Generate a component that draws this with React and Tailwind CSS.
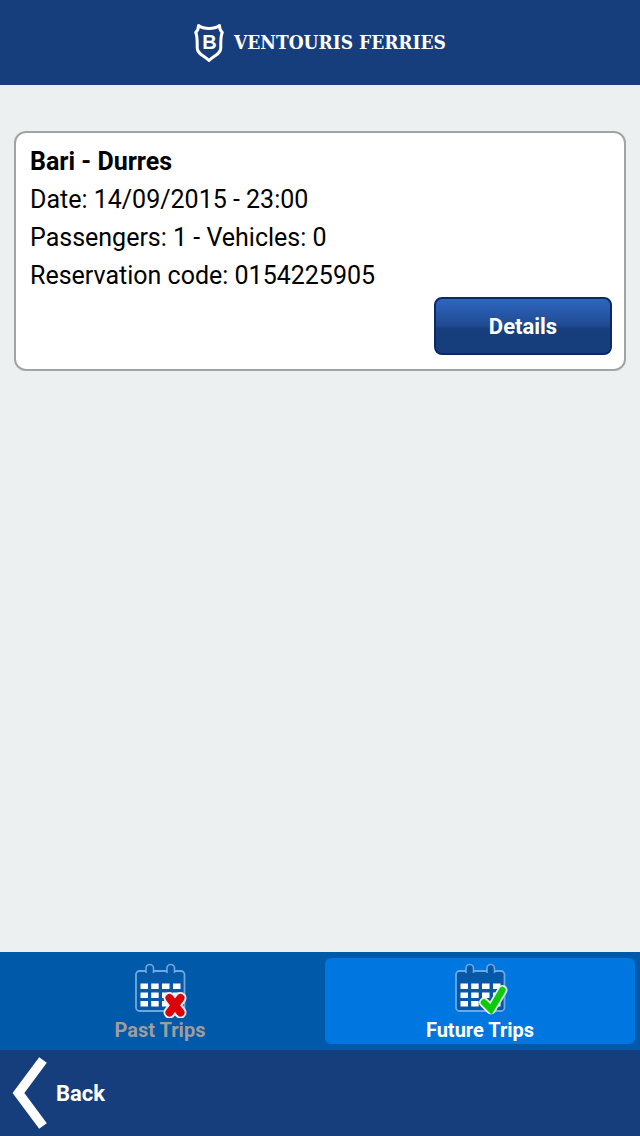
import { useState } from "react";

const TRIPS = {
  past: [],
  future: [
    { route: "Bari - Durres", date: "14/09/2015 - 23:00", passengers: 1, vehicles: 0, code: "0154225905" },
  ],
};

const TAB_CLASS = "flex flex-1 flex-col items-center rounded-md pt-1 pb-0.5 text-xl leading-6 font-bold";

function Shield() {
  return (
    <svg viewBox="0 0 30 40" className="h-10 w-[30px] shrink-0" fill="none" aria-hidden="true">
      <path
        d="M4.5 2.5C10 6.5 20 6.5 25.5 2.5C25.5 6 26.5 8 28.3 9.5C26.5 13 26.8 16 26.8 25C26.8 31 20 32.5 15 37.5C10 32.5 3.2 31 3.2 25C3.2 16 3.5 13 1.7 9.5C3.5 8 4.5 6 4.5 2.5Z"
        stroke="white"
        strokeWidth="3"
        strokeLinejoin="round"
      />
      <text x="15.5" y="26" textAnchor="middle" fill="white" fontSize="20" fontWeight="700" fontFamily="Liberation Sans, sans-serif">
        B
      </text>
    </svg>
  );
}

function CalendarIcon({ kind }) {
  return (
    <svg viewBox="0 0 56 56" className="h-14 w-14" fill="none" aria-hidden="true">
      <rect x="4" y="9" width="48.5" height="40" rx="3.5" fill="#0558a8" stroke="#6fa8de" strokeWidth="1.8" />
      <rect x="14" y="2.5" width="7.5" height="12" rx="3.7" fill="#0558a8" stroke="#6fa8de" strokeWidth="1.6" />
      <rect x="35" y="2.5" width="7.5" height="12" rx="3.7" fill="#0558a8" stroke="#6fa8de" strokeWidth="1.6" />
      <path d="M13 11h9.500v5h-9.500zM34 11h9.500v5h-9.500z" fill="#0558a8" />
      {[21.5, 30.5, 39].map((y) =>
        [8.5, 19.2, 30, 41].map((x) => <rect key={`${x}-${y}`} x={x} y={y} width="7.500" height="5.500" fill="white" />)
      )}
      {kind === "past" ? (
        <g strokeLinecap="round">
          <path d="M37.500 36L48.500 50.500M48.500 36L37.500 50.500" stroke="#e8eef5" strokeWidth="12" />
          <path d="M37.500 36L48.500 50.500M48.500 36L37.500 50.500" stroke="#dc0009" strokeWidth="8" />
        </g>
      ) : (
        <g strokeLinecap="round">
          <path d="M32 40.500L39 47.500L50.500 28" stroke="#e6f3e8" strokeWidth="10" strokeLinejoin="round" />
          <path d="M32 40.500L39 47.500L50.500 28" stroke="#0bcb0b" strokeWidth="6.500" />
        </g>
      )}
    </svg>
  );
}

function TripCard({ trip }) {
  return (
    <article className="rounded-xl border-2 border-[#a0a4a7] bg-white px-3 pt-2.5 pb-3.5 text-[25px] leading-[38px] text-black">
      <div className="px-0.5">
        <h2 className="font-bold">{trip.route}</h2>
        <p>Date: {trip.date}</p>
        <p>Passengers: {trip.passengers} - Vehicles: {trip.vehicles}</p>
        <p>Reservation code: {trip.code}</p>
      </div>
      <div className="flex justify-end pt-0.5">
        <button
          type="button"
          className="h-[58px] w-[178px] rounded-lg border-2 border-[#0b2a63] bg-linear-to-b from-[#2f66c2] via-[#1f4a90] via-50% to-[#173e7c] to-55% pt-0.5 text-[22px] font-bold text-white"
        >
          Details
        </button>
      </div>
    </article>
  );
}

export default function App() {
  const [tab, setTab] = useState("future");

  return (
    <div className="flex min-h-screen flex-col bg-[#ecf0f1] font-[Roboto,sans-serif]">
      <header className="flex h-[85px] items-center justify-center gap-2.5 bg-[#173e7c]">
        <Shield />
        <h1 className="font-['DejaVu_Serif_Condensed','Liberation_Serif',serif] text-[19px] font-bold text-white">VENTOURIS FERRIES</h1>
      </header>

      <main className="flex-1 space-y-4 px-3.5 pt-[46px]">
        {TRIPS[tab].map((trip) => (
          <TripCard key={trip.code} trip={trip} />
        ))}
      </main>

      <nav className="flex gap-2.5 bg-[#0059a9] px-[5px] py-1.5">
        <button
          type="button"
          onClick={() => setTab("past")}
          className={`${TAB_CLASS} ${tab === "past" ? "bg-[#0076e0] text-white" : "text-[#a09d9b]"}`}
        >
          <CalendarIcon kind="past" />
          Past Trips
        </button>
        <button
          type="button"
          onClick={() => setTab("future")}
          className={`${TAB_CLASS} ${tab === "future" ? "bg-[#0076e0] text-white" : "text-[#a09d9b]"}`}
        >
          <CalendarIcon kind="future" />
          Future Trips
        </button>
      </nav>

      <footer className="flex h-[86px] items-center bg-[#173e7c]">
        <button type="button" className="flex items-center gap-2 pl-3 text-[22px] font-bold text-white">
          <svg viewBox="0 0 36 74" className="h-[74px] w-9" fill="none" aria-hidden="true">
            <path d="M31 4L6.500 37L31 70" stroke="white" strokeWidth="9.500" />
          </svg>
          Back
        </button>
      </footer>
    </div>
  );
}
